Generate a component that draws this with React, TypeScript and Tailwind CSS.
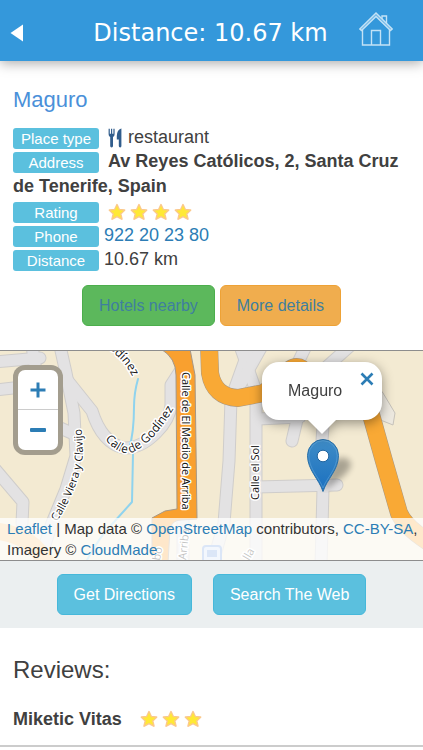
import type { ReactNode } from "react";

const roads = [
  "M-5 11L40 7",
  "M32 -5L36 20",
  "M-5 39L22 36",
  "M60 -5L66 22L74 62L76 105L66 138L52 172L38 215",
  "M68 30L92 60Q102 92 124 97Q140 98 156 82Q170 68 171 54L171 34L184 14",
  "M58 76L76 84",
  "M-5 118L23 151L22 172",
  "M183 160L183 215",
  "M250 -5L231 48L229 110L224 172L212 215",
  "M240 -5L256 40L256 215",
  "M262 -5L240 34",
  "M350 -5L305 35L292 90",
  "M306 -5L294 20",
  "M258 68L300 66",
  "M324 60L322 90",
  "M256 136L337 134",
  "M323 138L321 215",
];

const highways = [
  "M209 -8L210 22Q214 46 238 47L264 42L284 26Q296 6 310 26L344 40L370 60L384 110L399 162Q405 176 430 192",
];

const minorHighways = ["M-5 180Q34 184 48 215"];

function Star() {
  return (
    <svg viewBox="0 0 18 18" className="h-[18px] w-[18px]" aria-hidden="true">
      <path
        d="M9 1.8L11.2 6.7L16.5 7.2L12.6 10.8L13.8 16L9 13.4L4.2 16L5.4 10.8L1.5 7.2L6.8 6.7Z"
        fill="#ffe838"
        stroke="#fbc98c"
        strokeWidth="1.8"
        strokeLinejoin="round"
      />
      <path
        d="M9 2.8L11 7.2L15.4 7.700L12 10.7L13 15L9 12.7L5 15L6 10.7L2.600 7.700L7 7.200Z"
        fill="#ffe935"
      />
    </svg>
  );
}

function Stars({ count }: { count: number }) {
  return (
    <span role="img" aria-label={`${count} stars`} className="inline-flex gap-1 align-middle">
      {Array.from({ length: count }, (_, i) => (
        <Star key={i} />
      ))}
    </span>
  );
}

function Badge({ children }: { children: ReactNode }) {
  return (
    <span className="inline-block h-[21px] w-[86px] rounded-[3px] bg-[#5bc0de] text-center align-middle text-[15px] leading-[21px] text-white">
      {children}
    </span>
  );
}

function Cutlery() {
  return (
    <svg viewBox="0 0 15 20" className="inline-block h-5 w-[15px] align-middle" aria-hidden="true">
      <path
        d="M0.6 0.8V6.2Q0.6 8.4 2.2 9V18Q2.2 19.4 3.6 19.4Q5 19.4 5 18V9Q6.6 8.4 6.6 6.2V0.8H5.4V5.8H4.2V0.8H3V5.8H1.8V0.8Z"
        fill="#315d8c"
      />
      <path d="M13.2 0.6Q9 2 8.8 8V11.4H10.8V18Q10.8 19.4 12.2 19.4Q13.4 19.4 13.4 18V0.6Z" fill="#315d8c" />
    </svg>
  );
}

function MapDrawing() {
  return (
    <svg
      viewBox="0 0 423 209"
      preserveAspectRatio="xMidYMid slice"
      className="block h-full w-full"
      role="img"
      aria-label="Street map"
    >
      <defs>
        <path id="godinez" d="M105 88Q118 104 131 102Q156 92 180 46" />
        <path id="godinezTop" d="M109 -3L120 8Q129 16 137 36" />
        <path id="clavijo" d="M57 171Q82 130 83 100L80 50" />
      </defs>
      <rect width="423" height="209" fill="#f3ead2" />
      <path d="M377 34L383 42L395 62L393 74L378 68Z" fill="#ece8df" stroke="#c6c2ba" />
      <g fill="none" strokeLinejoin="round" strokeLinecap="round">
        {roads.map((d) => (
          <path key={d} d={d} stroke="#cfcdcb" strokeWidth="13" />
        ))}
        {roads.map((d) => (
          <path key={d} d={d} stroke="#e3e2e3" strokeWidth="11" />
        ))}
        {minorHighways.map((d) => (
          <path key={d} d={d} stroke="#fbc67d" strokeWidth="17" />
        ))}
        <path d="M138 28Q134 42 134 56Q134 82 129 98L133 103L132 151L114 171Q98 187 85 213" stroke="#8fd3ee" strokeWidth="2" />
        {highways.map((d) => (
          <path key={d} d={d} stroke="#a69785" strokeWidth="18" />
        ))}
        {highways.map((d) => (
          <path key={d} d={d} stroke="#f9a935" strokeWidth="17" />
        ))}
      </g>
      <path
        d="M161 -2Q176 7 176 24L177 158L165 160L152 167V212H168L170 178Q172 169 181 169L197 168L195 24L190 -2Z"
        fill="#f9a02f"
        stroke="#a69785"
      />
      <rect x="203" y="195" width="18" height="18" rx="3" fill="#cfe0f8" stroke="#6f9ae0" strokeWidth="2" />
      <path d="M207 199H217V206H207Z" fill="#6f9ae0" />
      <g
        fontFamily="'Open Sans', 'Noto Sans', sans-serif"
        fontSize="11"
        fill="#111"
        stroke="#fff"
        strokeWidth="3"
        strokeLinejoin="round"
        paintOrder="stroke"
      >
        <g fontSize="12">
          <text>
            <textPath href="#godinezTop">odínez</textPath>
          </text>
          <text>
            <textPath href="#godinez">Calle de Godínez</textPath>
          </text>
        </g>
        <text>
          <textPath href="#clavijo">Calle Viera y Clavijo</textPath>
        </text>
        <text transform="translate(182 21) rotate(90)">Calle de El Medio de Arriba</text>
        <text transform="translate(259 149) rotate(-90)">Calle el Sol</text>
        <text transform="translate(186 209) rotate(-84)">Arriba</text>
        <text transform="translate(160 210) rotate(-80)">bo</text>
        <text transform="translate(249 210) rotate(-60)">lla</text>
      </g>
    </svg>
  );
}

function Marker() {
  return (
    <svg viewBox="0 0 64 56" className="absolute top-[86px] left-[305px] h-14 w-16" aria-hidden="true">
      <defs>
        <linearGradient id="pin" x1="0" y1="0" x2="0" y2="1">
          <stop offset="0" stopColor="#3f8cc6" />
          <stop offset="1" stopColor="#1a70c0" />
        </linearGradient>
        <filter id="soft" x="-30%" y="-30%" width="160%" height="160%">
          <feGaussianBlur stdDeviation="3" />
        </filter>
      </defs>
      <path d="M18 54L28 24Q42 16 46 27Q46 36 18 54Z" fill="#000" opacity="0.3" filter="url(#soft)" />
      <path
        d="M18 54.500C14 42 2.500 33 2.500 18.500A15.500 16 0 0 1 33.500 18.500C33.500 33 22 42 18 54.500Z"
        fill="url(#pin)"
        stroke="#2970a8"
      />
      <path d="M18 51C14.500 41 3.800 32 3.800 18.500A14.200 14.800 0 0 1 32.200 18.500C32.200 32 21.500 41 18 51Z" fill="none" stroke="#69acdd" strokeOpacity="0.5" />
      <circle cx="18" cy="19" r="5.800" fill="#fff" stroke="#2466a0" />
    </svg>
  );
}

function MapPanel() {
  return (
    <section className="relative h-[211px] overflow-hidden border-y border-[#8d8d8d]">
      <MapDrawing />
      <div className="absolute top-[14px] left-[13px] w-[50px] rounded-[12px] bg-[#a39d8e] p-[5px]">
        <div className="flex flex-col overflow-hidden rounded-[7px] bg-white">
          <button aria-label="Zoom in" className="flex h-10 items-center justify-center border-b border-[#cccccc]">
            <svg viewBox="0 0 16 16" className="h-4 w-4" stroke="#2c7db5" strokeWidth="3">
              <path d="M0.500 8H15.500M8 0.500V15.500" />
            </svg>
          </button>
          <button aria-label="Zoom out" className="flex h-10 items-center justify-center">
            <svg viewBox="0 0 18 16" className="h-4 w-[18px]">
              <rect x="1" y="6" width="16" height="4" rx="1" fill="#2c7db5" />
            </svg>
          </button>
        </div>
      </div>
      <Marker />
      <div className="absolute top-[11px] left-[262px] drop-shadow-[0_3px_6px_rgba(0,0,0,0.4)]">
        <div className="relative h-[58px] w-[120px] rounded-[17px] bg-white px-[26px] text-base leading-[58px] text-[#404040]">
          Maguro
          <button aria-label="Close popup" className="absolute top-[9px] right-[7px]">
            <svg viewBox="0 0 16 16" className="h-4 w-4" stroke="#2c7db5" strokeWidth="2.600">
              <path d="M2.500 2.500L13.500 13.500M13.500 2.500L2.500 13.500" />
            </svg>
          </button>
        </div>
        <svg viewBox="0 0 28 14" className="mx-auto block h-[14px] w-7" aria-hidden="true">
          <path d="M0 0H28L14 14Z" fill="#fff" />
        </svg>
      </div>
      <p className="absolute inset-x-0 bottom-0 bg-white/75 pl-[7px] text-[15px] leading-[21px] text-[#333]">
        <a href="#leaflet" className="text-[#2c7db5]">Leaflet</a> | Map data ©{" "}
        <a href="#osm" className="text-[#2c7db5]">OpenStreetMap</a> contributors,{" "}
        <a href="#license" className="text-[#2c7db5]">CC-BY-SA</a>, Imagery ©{" "}
        <a href="#cloudmade" className="text-[#2c7db5]">CloudMade</a>
      </p>
    </section>
  );
}

export default function App() {
  return (
    <div className="bg-white font-['Liberation_Sans',Arial,sans-serif] text-lg text-[#404040]">
      <header className="flex h-[61px] items-center bg-[#3498db] pr-[30px] pb-1 pl-[10px] text-white shadow-[0_2px_12px_rgba(0,0,0,0.35)]">
        <button aria-label="Back" className="flex h-10 w-9 items-center pt-2">
          <svg viewBox="0 0 14 18" className="h-[18px] w-[14px]" fill="#fff">
            <path d="M0.500 9L13 0.500V17.500Z" />
          </svg>
        </button>
        <h1 className="flex-1 pt-2 pl-4 text-center font-['DejaVu_Sans',Verdana,sans-serif] text-2xl leading-8">
          Distance: 10.67 km
        </h1>
        <a href="#home" aria-label="Home">
          <svg viewBox="0 0 34 34" className="h-[34px] w-[34px]" fill="none" stroke="#c3e2f6" strokeWidth="1.400">
            <path d="M0.800 17L17 1L33.200 17L31.500 18.500L17 4.500L2.500 18.500Z" fill="#c3e2f6" fillOpacity="0.4" />
            <path d="M3.500 17.500V33H30.500V17.500" />
            <path d="M12.500 33V18.500H21.500V33" />
            <path d="M23 7V4H27.500V11.500" />
          </svg>
        </a>
      </header>

      <main>
        <div className="px-[13px] pt-[25px]">
          <h2 className="text-[22px] leading-7 text-[#4a90d9]">Maguro</h2>
          <div className="pt-[11px] leading-6">
            <div><Badge>Place type</Badge> <span className="inline-block pl-1"><Cutlery /> restaurant</span></div>
            <div className="leading-[25px]"><Badge>Address</Badge> <b className="pl-1">Av Reyes Católicos, 2, Santa Cruz de Tenerife, Spain</b></div>
            <div><Badge>Rating</Badge> <span className="pl-1"><Stars count={4} /></span></div>
            <div><Badge>Phone</Badge> <a href="tel:922202380" className="text-[#2c7db5]">922 20 23 80</a></div>
            <div><Badge>Distance</Badge> 10.67 km</div>
          </div>
          <div className="flex justify-center gap-[5px] pt-[14px] pb-6 text-base text-[#3f7f9f]">
            <button className="h-[41px] rounded-[6px] border border-[#4cae4c] bg-[#5cb85c] px-4">Hotels nearby</button>
            <button className="h-[41px] rounded-[6px] border border-[#eea236] bg-[#f0ad4e] px-4">More details</button>
          </div>
        </div>

        <MapPanel />

        <div className="flex justify-center gap-[21px] bg-[#ebeff0] pt-[13px] pb-[13px] text-base text-white">
          <button className="h-[41px] rounded-[6px] border border-[#46b8da] bg-[#5bc0de] px-4">Get Directions</button>
          <button className="h-[41px] rounded-[6px] border border-[#46b8da] bg-[#5bc0de] px-4">Search The Web</button>
        </div>

        <section className="pt-[26px]">
          <h2 className="px-[13px] text-2xl leading-8">Reviews:</h2>
          <div className="flex items-center gap-[18px] border-b-2 border-[#cccccc] px-[13px] pt-[19px] pb-3">
            <b>Miketic Vitas</b>
            <Stars count={3} />
          </div>
        </section>
      </main>
    </div>
  );
}
